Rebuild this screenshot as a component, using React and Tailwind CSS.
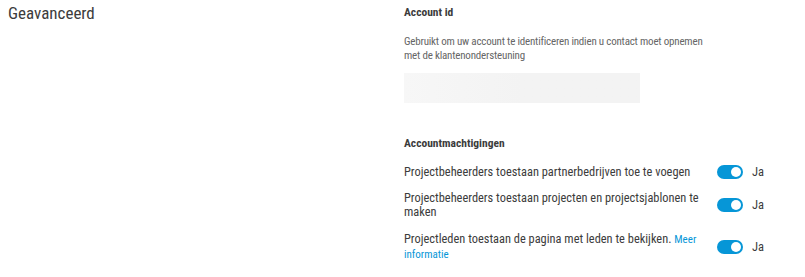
import React from "react";

function Toggle() {
  return (
    <div className="flex items-center shrink-0">
      <div className="relative w-[26px] h-[14px] rounded-full bg-[#0696d7]">
        <div className="absolute right-[2px] top-[2px] w-[10px] h-[10px] rounded-full bg-white" />
      </div>
      <span className="ml-[9px] text-[12.5px] leading-[14px] text-[#3c3c3c]">Ja</span>
    </div>
  );
}

function Row({ children, className = "" }) {
  return (
    <div className={"flex items-center " + className}>
      <div className="w-[310px] text-[12.4px] leading-[14px] text-[#3c3c3c]">{children}</div>
      <div className="ml-[3px]">
        <Toggle />
      </div>
    </div>
  );
}

export default function App() {
  return (
    <div className="w-[805px] h-[277px] bg-white flex font-['Roboto_Condensed','Roboto',sans-serif]">
      <div className="w-[404px] pl-[8px] pt-[1px]">
        <h2 className="text-[17px] leading-[24px] text-[#3c3c3c]">Geavanceerd</h2>
      </div>
      <div className="flex-1 flex flex-col">
        <div className="mt-[4px] text-[11.5px] leading-[16px] font-bold text-[#3c3c3c]">Account id</div>
        <p className="mt-[15px] w-[312px] text-[11px] leading-[14px] tracking-[-0.2px] text-[#666666]">
          Gebruikt om uw account te identificeren indien u contact moet opnemen met de klantenondersteuning
        </p>
        <div className="mt-[10px] w-[236px] h-[30px] bg-gradient-to-r from-[#f7f7f7] via-[#f3f3f3] to-[#f3f3f3]" />
        <div className="mt-[32px] text-[11.5px] leading-[16px] font-bold text-[#3c3c3c]">Accountmachtigingen</div>
        <Row className="mt-[14px]">Projectbeheerders toestaan partnerbedrijven toe te voegen</Row>
        <Row className="mt-[12px]">Projectbeheerders toestaan projecten en projectsjablonen te maken</Row>
        <Row className="mt-[13px]">
          <span>Projectleden toestaan de pagina met leden te bekijken.</span>{" "}
          <a className="text-[11px] text-[#0696d7]">Meer</a>{" "}
          <a className="text-[11px] text-[#0696d7]">informatie</a>
        </Row>
      </div>
    </div>
  );
}
